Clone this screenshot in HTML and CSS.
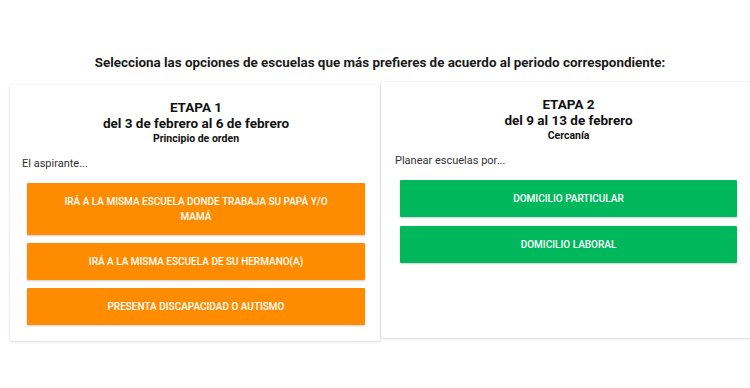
FILE: index.html
```html
<!DOCTYPE html>
<html lang="es">
<head>
<meta charset="utf-8">
<link rel="stylesheet" href="styles.css">
</head>
<body>
<div class="page">
  <h1 class="title">Selecciona las opciones de escuelas que más prefieres de acuerdo al periodo correspondiente:</h1>
  <div class="row">
    <section class="card card-left">
      <div class="head">
        <div class="stage">ETAPA 1</div>
        <div class="dates">del 3 de febrero al 6 de febrero</div>
        <div class="crit">Principio de orden</div>
      </div>
      <p class="lead">El aspirante...</p>
      <div class="buttons">
        <button class="btn orange">IRÁ A LA MISMA ESCUELA DONDE TRABAJA SU PAPÁ Y/O MAMÁ</button>
        <button class="btn orange">IRÁ A LA MISMA ESCUELA DE SU HERMANO(A)</button>
        <button class="btn orange">PRESENTA DISCAPACIDAD O AUTISMO</button>
      </div>
    </section>
    <section class="card card-right">
      <div class="head">
        <div class="stage">ETAPA 2</div>
        <div class="dates">del 9 al 13 de febrero</div>
        <div class="crit">Cercanía</div>
      </div>
      <p class="lead">Planear escuelas por...</p>
      <div class="buttons">
        <button class="btn green">DOMICILIO PARTICULAR</button>
        <button class="btn green">DOMICILIO LABORAL</button>
      </div>
    </section>
  </div>
</div>
</body>
</html>
```
FILE: styles.css
```css
html, body {
  margin: 0;
  padding: 0;
  background: #ffffff;
  overflow: hidden;
}
body {
  font-family: Roboto, "Liberation Sans", Arial, sans-serif;
  color: #212121;
  width: 750px;
  height: 388px;
}
.page {
  padding-top: 53px;
}
.title {
  margin: 0;
  font-size: 13.4px;
  font-weight: 700;
  line-height: 20px;
  text-align: center;
  padding-left: 10px;
  color: #1a1a1a;
}
.row {
  display: flex;
  align-items: flex-start;
  margin-top: 9px;
  margin-left: 10px;
  gap: 1px;
  width: 760px;
}
.card {
  background: #fff;
  box-shadow: 0 1px 3px rgba(0,0,0,0.14), 0 0 1px rgba(0,0,0,0.12);
  border-radius: 2px;
  padding-top: 14px;
  box-sizing: border-box;
  height: 256px;
}
.card-left {
  width: 370px;
  margin-top: 3px;
  padding-left: 17px;
  padding-right: 15px;
}
.card-right {
  width: 378px;
  padding-left: 19px;
  padding-right: 22px;
}
.head {
  text-align: center;
}
.stage {
  font-size: 13.5px;
  font-weight: 700;
  line-height: 16px;
  color: #111;
}
.dates {
  font-size: 13.5px;
  font-weight: 700;
  line-height: 16px;
  color: #111;
}
.crit {
  font-size: 10.5px;
  font-weight: 700;
  line-height: 15px;
  color: #111;
}
.lead {
  margin: 10px 0 12px -5px;
  font-size: 11px;
  line-height: 15px;
  color: #333;
}
.buttons {
  display: flex;
  flex-direction: column;
  gap: 8px;
}
.btn {
  border: 0;
  border-radius: 1px;
  color: #fff;
  font-family: Roboto, "Liberation Sans", Arial, sans-serif;
  font-size: 10px;
  font-weight: 500;
  line-height: 15px;
  padding: 11px 28px;
  text-align: center;
  box-shadow: 0 1px 2px rgba(0,0,0,0.2);
  min-height: 37px;
  width: 100%;
}
.orange { background: #ff8c00; }
.green { background: #00b85c; }
.card-right .buttons { gap: 9px; }
```
